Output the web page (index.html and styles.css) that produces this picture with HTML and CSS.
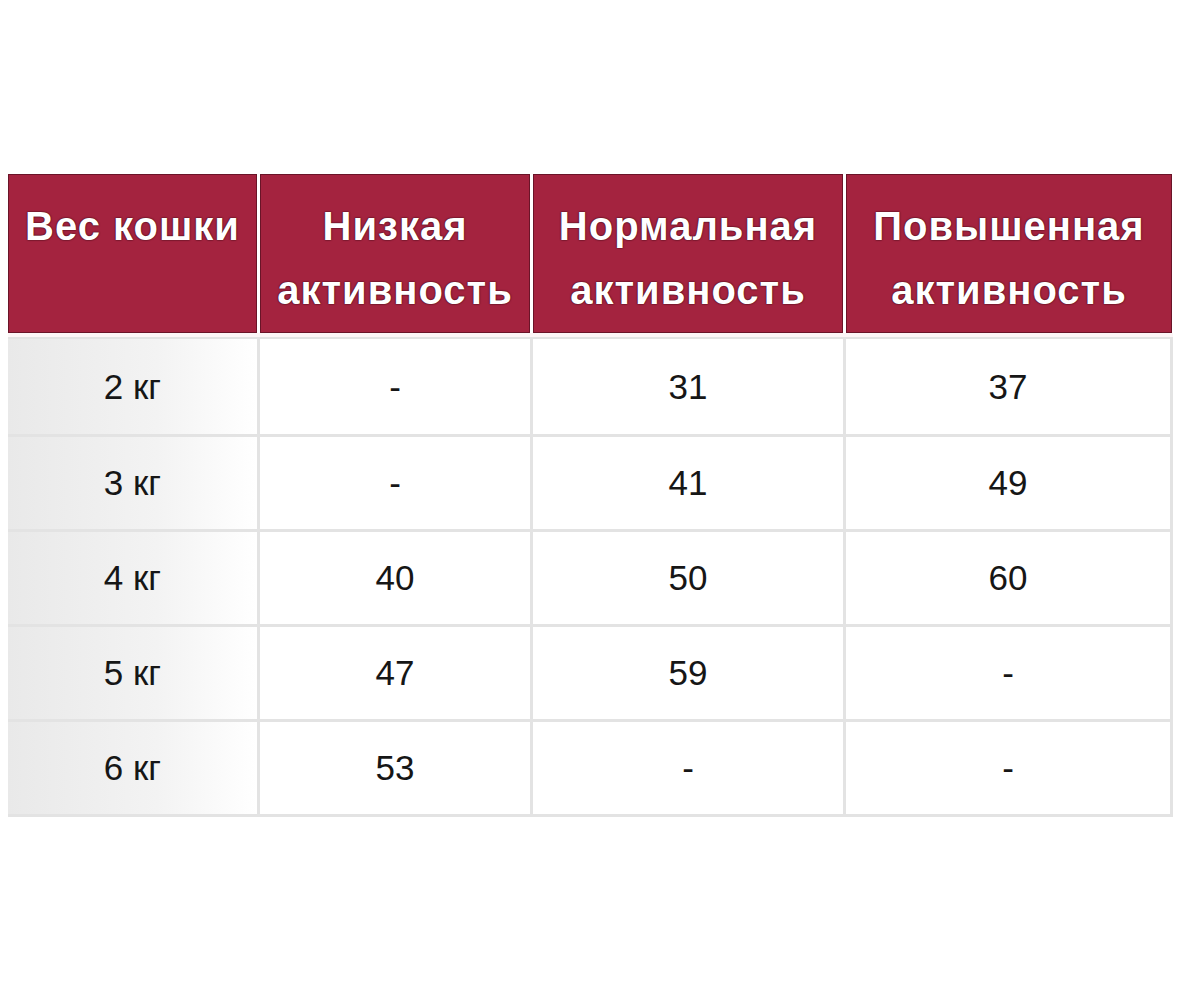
FILE: index.html
```html
<!DOCTYPE html>
<html lang="ru">
<head>
<meta charset="utf-8">
<link rel="stylesheet" href="styles.css">
</head>
<body>
<div class="page">
  <div class="table">
    <div class="head">
      <div class="th">Вес кошки</div>
      <div class="th">Низкая<br>активность</div>
      <div class="th">Нормальная<br>активность</div>
      <div class="th">Повышенная<br>активность</div>
    </div>
    <div class="body">
      <div class="td first">2 кг</div><div class="td">-</div><div class="td">31</div><div class="td">37</div>
      <div class="td first">3 кг</div><div class="td">-</div><div class="td">41</div><div class="td">49</div>
      <div class="td first">4 кг</div><div class="td">40</div><div class="td">50</div><div class="td">60</div>
      <div class="td first">5 кг</div><div class="td">47</div><div class="td">59</div><div class="td">-</div>
      <div class="td first">6 кг</div><div class="td">53</div><div class="td">-</div><div class="td">-</div>
    </div>
  </div>
</div>
</body>
</html>
```

FILE: styles.css
```css
html, body {
  margin: 0;
  padding: 0;
  background: #ffffff;
}
.page {
  width: 1200px;
  height: 1001px;
  padding: 174px 0 0 8px;
  box-sizing: border-box;
  font-family: "Liberation Sans", Arial, sans-serif;
}
.table {
  width: 1165px;
}
.head {
  display: grid;
  grid-template-columns: 249px 270px 310px 326px;
  column-gap: 3px;
  height: 159px;
}
.th {
  background: #a4233f;
  border: 1px solid #6a1428;
  box-sizing: border-box;
  color: #ffffff;
  font-weight: bold;
  font-size: 40px;
  letter-spacing: 1px;
  line-height: 64px;
  text-align: center;
  padding-top: 19px;
  text-shadow: 0 0 2px #3b0a16, 0 0 1px #3b0a16;
}
.body {
  display: grid;
  grid-template-columns: 249px 270px 310px 324px;
  grid-template-rows: 95px repeat(4, 92px);
  gap: 3px;
  background: #e3e3e3;
  padding: 2px 3px 3px 0;
  border-top: 4px solid #fdf6f7;
}
.td {
  background: #ffffff;
  display: flex;
  align-items: center;
  justify-content: center;
  font-size: 35px;
  color: #161616;
}
.td.first {
  background: linear-gradient(to right, #e9e9e9 0%, #f3f3f3 60%, #ffffff 100%);
}
```
